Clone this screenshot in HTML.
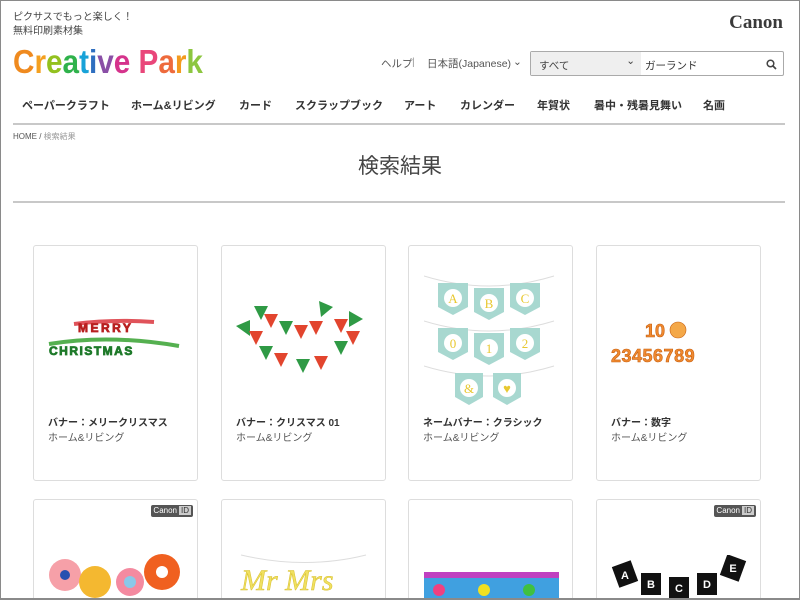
<!DOCTYPE html>
<html><head><meta charset="utf-8"><style>
*{margin:0;padding:0;box-sizing:border-box}
html,body{width:800px;height:600px;overflow:hidden;background:#fff}
body{position:relative;font-family:"Liberation Sans","Noto Sans CJK JP",sans-serif;color:#333}
.frame{position:absolute;left:0;top:0;width:800px;height:600px;border:1px solid #8a8a8a;border-bottom:2px solid #8a8a8a;pointer-events:none;z-index:5}
.abs{position:absolute}
.tag{left:13px;top:11px;font-size:10px;line-height:14px;color:#444}
.logo{left:13px;top:43px;font-family:"Liberation Sans Narrow","Liberation Sans",sans-serif;font-weight:bold;font-size:33px;line-height:38px;white-space:nowrap;transform:scaleX(0.9);transform-origin:left}
.canon{right:17px;top:12px;font-family:"Liberation Serif",serif;font-weight:bold;font-size:19px;color:#3a3a3a}
.util{top:56px;font-size:10.5px;color:#555}
.search{left:530px;top:51px;width:254px;height:25px;border:1px solid #aaa;border-radius:2px;display:flex;font-size:10.5px}
.search .sel{width:110px;background:#efefef;padding:6px 8px;position:relative;color:#444}
.search .in{flex:1;padding:6px 4px;color:#333;position:relative}
.nav{top:97px;left:0;width:800px;font-size:11px;font-weight:bold;color:#333;white-space:nowrap}
.nav span{position:absolute;top:0}
.hr{left:13px;width:772px;height:2px;background:#c8c8c8}
.card{position:absolute;width:165px;height:236px;border:1px solid #ddd;border-radius:3px;background:#fff;overflow:hidden}
.card .t{position:absolute;left:14px;top:168px;font-size:10px;font-weight:bold;color:#333;white-space:nowrap}
.card .c{position:absolute;left:14px;top:183px;font-size:10px;color:#555;white-space:nowrap}
.cid{position:absolute;right:4px;top:5px;background:#555;color:#fff;font-size:8px;padding:1px 2px;border-radius:2px;line-height:10px}
.cid b{background:#ccc;color:#333;padding:0 2px;margin-left:2px;font-weight:normal}
</style></head><body>
<div class="frame"></div>
<div class="abs tag">ピクサスでもっと楽しく！<br>無料印刷素材集</div>
<div class="abs logo"><span style="color:#ef8a1f">C</span><span style="color:#f4a020">r</span><span style="color:#93c11f">e</span><span style="color:#2fb24b">a</span><span style="color:#18a2d8">t</span><span style="color:#2f6fc0">i</span><span style="color:#8a4fa6">v</span><span style="color:#d5338c">e</span> <span style="color:#e9467a">P</span><span style="color:#ee6a3c">a</span><span style="color:#f39a1e">r</span><span style="color:#8cc63f">k</span></div>
<div class="abs canon">Canon</div>
<div class="abs util" style="left:381px">ヘルプ</div>
<div class="abs util" style="left:412px;color:#999">|</div>
<div class="abs util" style="left:427px">日本語(Japanese)</div>
<div class="abs util" style="left:513px">⌄</div>
<div class="abs search"><div class="sel">すべて<span style="position:absolute;right:6px;top:3px">⌄</span></div><div class="in">ガーランド<svg style="position:absolute;right:6px;top:7px" width="11" height="11" viewBox="0 0 11 11"><circle cx="4.5" cy="4.5" r="3.3" fill="none" stroke="#444" stroke-width="1.5"/><path d="M7 7l3 3" stroke="#444" stroke-width="1.7"/></svg></div></div>
<div class="abs nav">
<span style="left:22px">ペーパークラフト</span><span style="left:131px">ホーム&amp;リビング</span><span style="left:239px">カード</span><span style="left:295px">スクラップブック</span><span style="left:404px">アート</span><span style="left:460px">カレンダー</span><span style="left:537px">年賀状</span><span style="left:594px">暑中・残暑見舞い</span><span style="left:703px">名画</span></div>
<div class="abs hr" style="top:123px"></div>
<div class="abs" style="left:13px;top:131px;font-size:8px;color:#555">HOME / <span style="color:#999">検索結果</span></div>
<div class="abs" style="left:0;width:800px;top:150px;text-align:center;font-size:21px;color:#444">検索結果</div>
<div class="abs hr" style="top:201px"></div>

<div class="card" style="left:33px;top:245px">
<svg class="abs" style="left:10px;top:60px" width="145" height="70" font-family="Liberation Sans" font-weight="bold"><path d="M30 18 Q70 13 110 16" stroke="#e0535a" stroke-width="4" fill="none"/><path d="M5 38 Q65 28 135 40" stroke="#55b050" stroke-width="4" fill="none"/><text x="34" y="26" font-size="12" fill="#b82020" letter-spacing="2.5" stroke="#b82020" stroke-width=".8">MERRY</text><text x="5" y="49" font-size="12" fill="#1f7a2a" letter-spacing="1.5" stroke="#1f7a2a" stroke-width=".8">CHRISTMAS</text></svg>
<div class="t">バナー：メリークリスマス</div><div class="c">ホーム&amp;リビング</div></div>

<div class="card" style="left:221px;top:245px">
<svg class="abs" style="left:12px;top:55px" width="140" height="80"><g fill="#2f9a45"><path d="M2 25l14-6 0 16z"/><path d="M20 5l14 0-7 14z"/><path d="M45 20l14 0-7 14z"/><path d="M85 0l14 6-12 10z"/><path d="M115 10l14 8-14 8z"/><path d="M25 45l14 0-7 14z"/><path d="M62 58l14 0-7 14z"/><path d="M100 40l14 0-7 14z"/></g><g fill="#e2452e"><path d="M15 30l14 0-7 14z"/><path d="M30 13l14 0-7 14z"/><path d="M60 24l14 0-7 14z"/><path d="M75 20l14 0-7 14z"/><path d="M100 18l14 0-7 14z"/><path d="M40 52l14 0-7 14z"/><path d="M80 55l14 0-7 14z"/><path d="M112 30l14 0-7 14z"/></g></svg>
<div class="t">バナー：クリスマス 01</div><div class="c">ホーム&amp;リビング</div></div>

<div class="card" style="left:408px;top:245px">
<svg class="abs" style="left:15px;top:25px" width="140" height="140" font-family="Liberation Serif" font-size="13" fill="#e8c830" text-anchor="middle"><g stroke="#ddd" fill="none"><path d="M0 5 Q65 25 130 5"/><path d="M0 50 Q65 70 130 50"/><path d="M0 95 Q65 115 130 95"/></g><g fill="#a8d8d0"><path d="M14 12h30v24l-15 8-15-8z"/><path d="M50 17h30v24l-15 8-15-8z"/><path d="M86 12h30v24l-15 8-15-8z"/><path d="M14 57h30v24l-15 8-15-8z"/><path d="M50 62h30v24l-15 8-15-8z"/><path d="M86 57h30v24l-15 8-15-8z"/><path d="M31 102h28v24l-14 8-14-8z"/><path d="M69 102h28v24l-14 8-14-8z"/></g><g fill="#fff"><circle cx="29" cy="27" r="9"/><circle cx="65" cy="32" r="9"/><circle cx="101" cy="27" r="9"/><circle cx="29" cy="72" r="9"/><circle cx="65" cy="77" r="9"/><circle cx="101" cy="72" r="9"/><circle cx="45" cy="117" r="9"/><circle cx="83" cy="117" r="9"/></g><text x="29" y="32">A</text><text x="65" y="37">B</text><text x="101" y="32">C</text><text x="29" y="77">0</text><text x="65" y="82">1</text><text x="101" y="77">2</text><text x="45" y="122">&amp;</text><text x="83" y="122">♥</text></svg>
<div class="t">ネームバナー：クラシック</div><div class="c">ホーム&amp;リビング</div></div>

<div class="card" style="left:596px;top:245px">
<svg class="abs" style="left:12px;top:70px" width="145" height="60" font-family="Liberation Sans" font-weight="bold" font-size="18" fill="#f08a30" stroke="#c86010" stroke-width=".6"><text x="36" y="21">10</text><circle cx="69" cy="14" r="8" fill="#f4a848"/><text x="2" y="46" letter-spacing="0.5">23456789</text></svg>
<div class="t">バナー：数字</div><div class="c">ホーム&amp;リビング</div></div>

<div class="card" style="left:33px;top:499px"><div class="cid">Canon<b>ID</b></div>
<svg class="abs" style="left:14px;top:50px" width="140" height="50"><circle cx="17" cy="25" r="16" fill="#f6a0a8"/><circle cx="17" cy="25" r="5" fill="#2850b0"/><circle cx="47" cy="32" r="16" fill="#f4b830"/><circle cx="82" cy="32" r="14" fill="#f48aa0"/><circle cx="82" cy="32" r="6" fill="#8ac8e8"/><circle cx="114" cy="22" r="18" fill="#f06020"/><circle cx="114" cy="22" r="6" fill="#fff"/></svg></div>
<div class="card" style="left:221px;top:499px">
<svg class="abs" style="left:14px;top:40px" width="140" height="60"><path d="M5 15 Q70 30 130 15" stroke="#ddd" fill="none"/><text x="5" y="50" font-family="Liberation Serif" font-style="italic" font-size="30" fill="#f0e060" stroke="#d8c030" stroke-width=".5">Mr Mrs</text></svg></div>
<div class="card" style="left:408px;top:499px">
<svg class="abs" style="left:15px;top:70px" width="140" height="40"><rect x="0" y="2" width="135" height="6" fill="#c040c0"/><rect x="0" y="8" width="135" height="30" fill="#40a0e0"/><circle cx="15" cy="20" r="6" fill="#f04080"/><circle cx="60" cy="20" r="6" fill="#f0e020"/><circle cx="105" cy="20" r="6" fill="#40c040"/></svg></div>
<div class="card" style="left:596px;top:499px"><div class="cid">Canon<b>ID</b></div>
<svg class="abs" style="left:14px;top:55px" width="140" height="50" font-family="Liberation Sans" font-weight="bold" font-size="11" fill="#fff" text-anchor="middle"><g fill="#111"><rect x="4" y="8" width="20" height="22" transform="rotate(-20 14 19)"/><rect x="30" y="18" width="20" height="22"/><rect x="58" y="22" width="20" height="22"/><rect x="86" y="18" width="20" height="22"/><rect x="112" y="2" width="20" height="22" transform="rotate(20 122 13)"/></g><text x="14" y="24">A</text><text x="40" y="33">B</text><text x="68" y="37">C</text><text x="96" y="33">D</text><text x="122" y="17">E</text></svg></div>
</body></html>
